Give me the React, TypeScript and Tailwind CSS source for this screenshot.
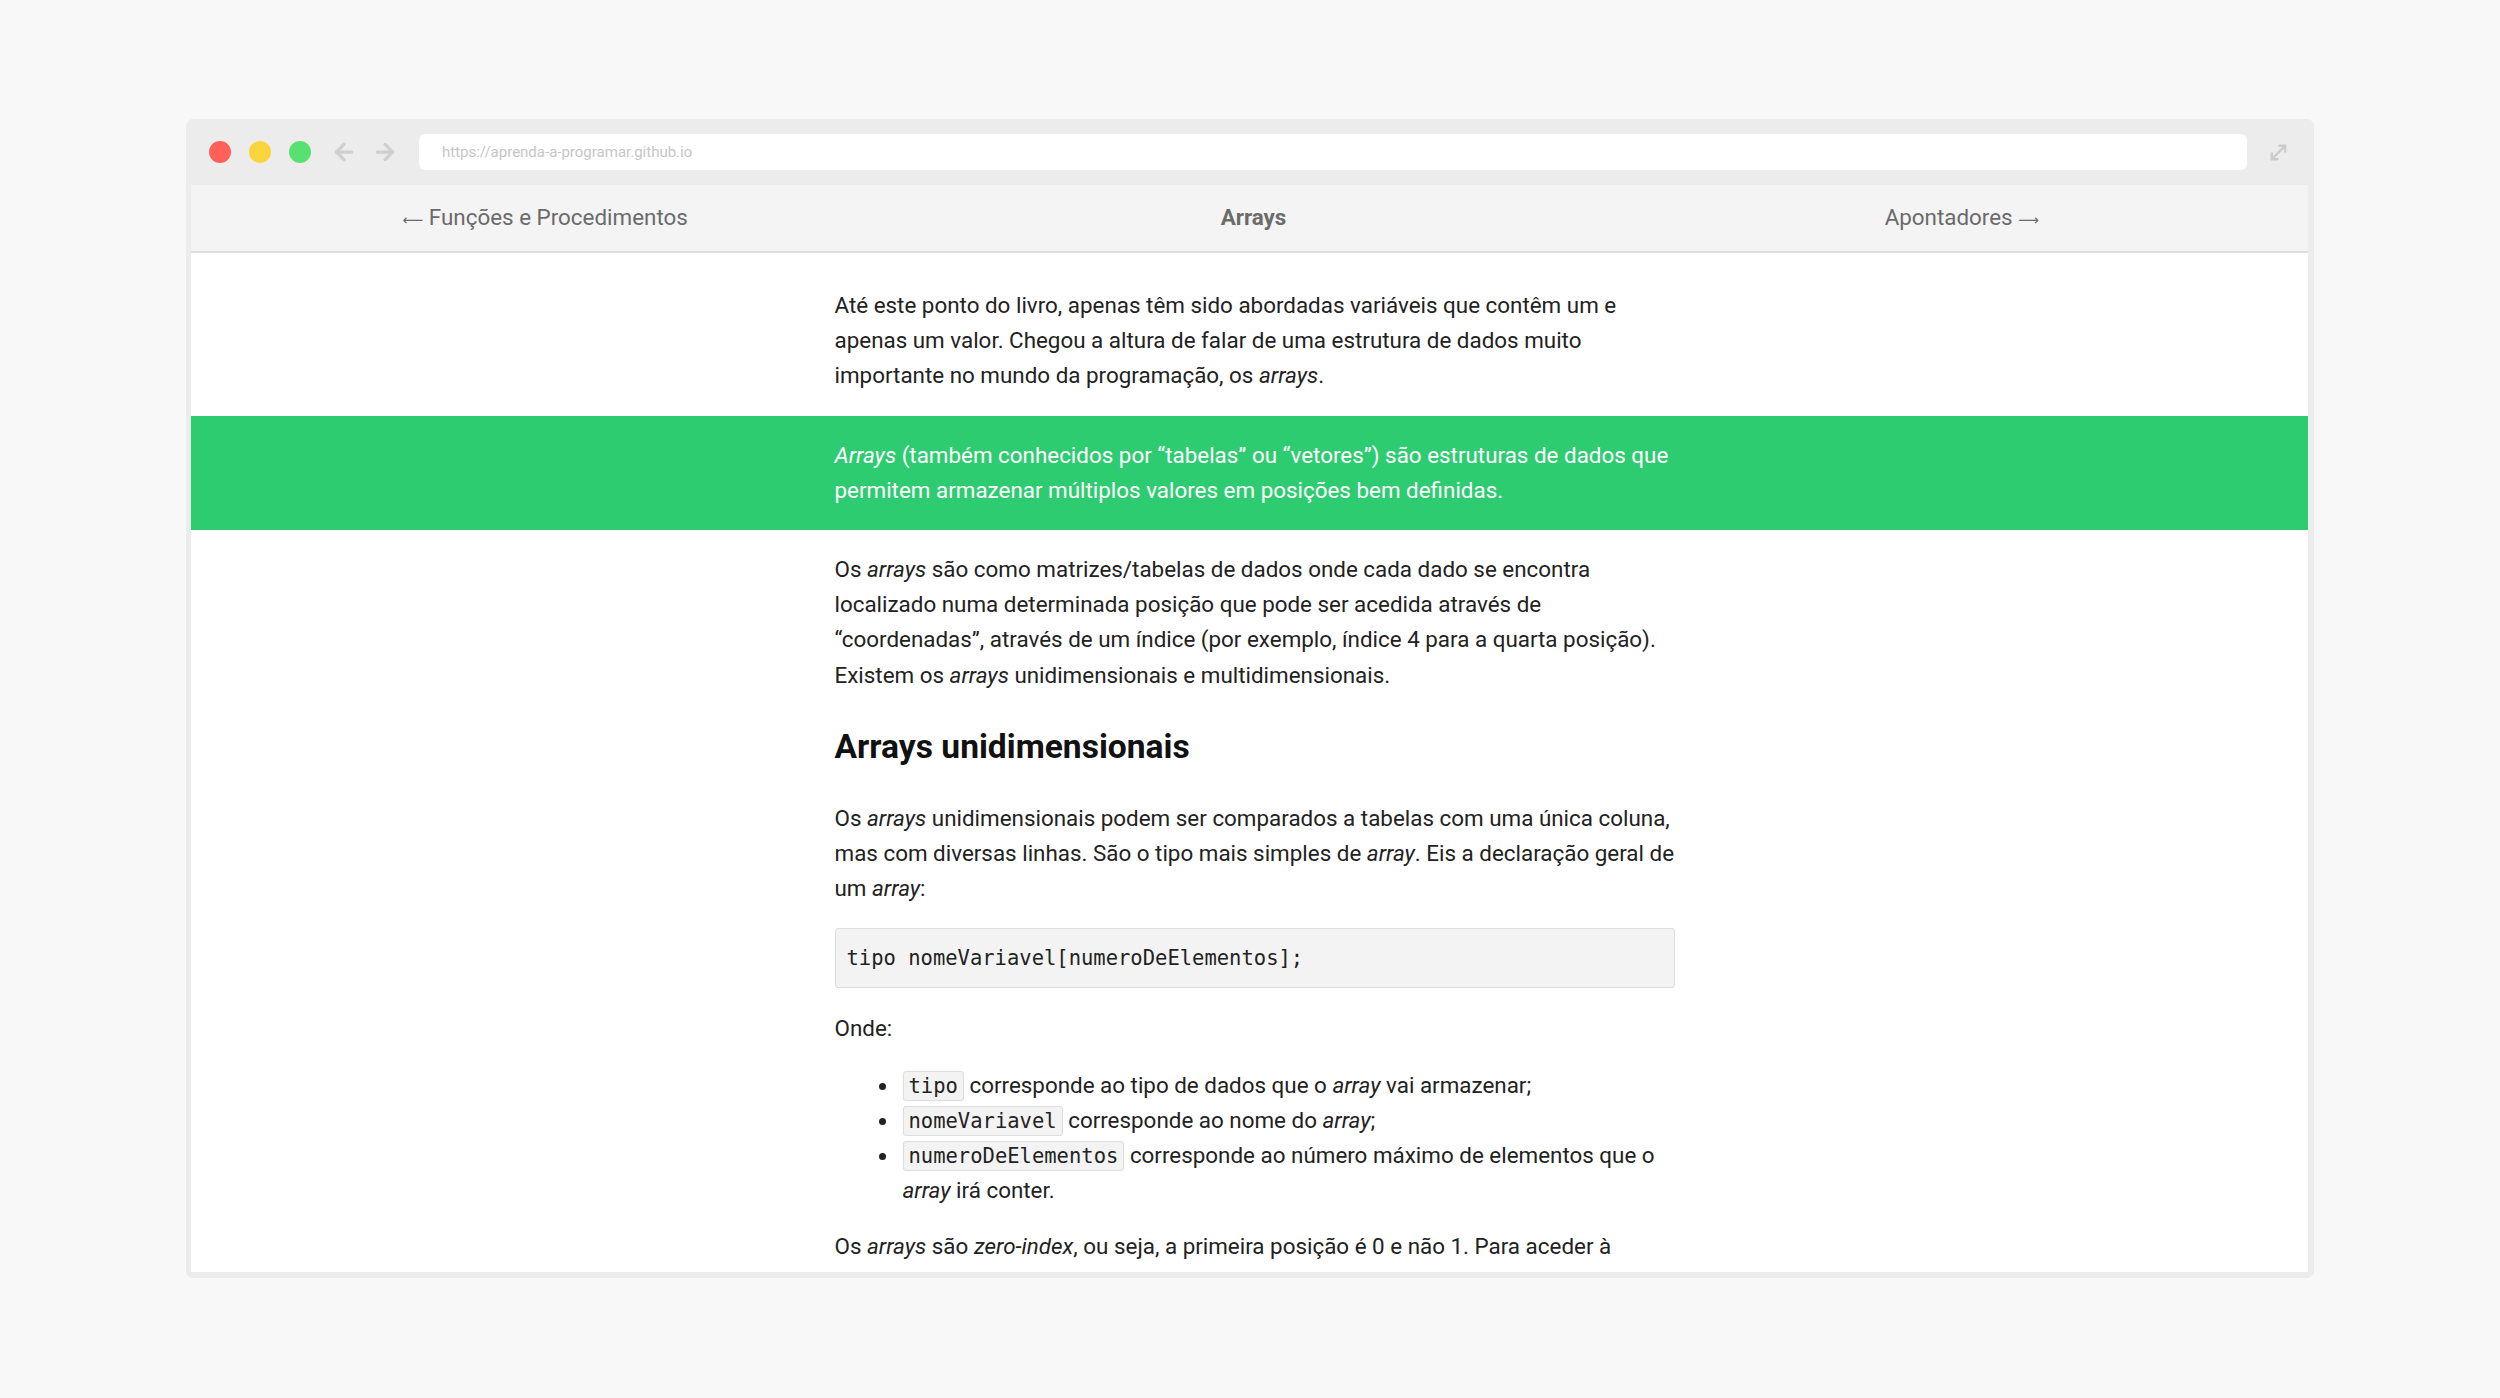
import React from "react";
import { ArrowLeft, ArrowRight, MoveDiagonal } from "lucide-react";

function Col({ children, className = "" }: { children: React.ReactNode; className?: string }) {
  return (
    <div className="pl-[10px]">
      <div className={"mx-auto w-[840px] " + className}>{children}</div>
    </div>
  );
}

function IC({ children }: { children: React.ReactNode }) {
  return (
    <code className="rounded-[3px] border border-[#dddddd] bg-[#f3f3f3] px-[5px] py-[2px] text-[20.5px] leading-none text-[#222] [font-family:'DejaVu_Sans_Mono','Liberation_Mono',monospace]">
      {children}
    </code>
  );
}

function Arr({ c }: { c: string }) {
  return <span className="text-[14.5px] [font-family:'DejaVu_Sans',sans-serif]">{c}</span>;
}

function Li({ children }: { children: React.ReactNode }) {
  return (
    <li className="relative before:absolute before:left-[-24px] before:top-[15px] before:h-[7px] before:w-[7px] before:rounded-full before:bg-[#222] before:content-['']">
      {children}
    </li>
  );
}

export default function App() {
  return (
    <div className="min-h-screen bg-[#f8f8f8] pt-[119px] pb-[120px] [font-family:Roboto,'Noto_Sans',sans-serif]">
      <div className="mx-auto w-[2128px] rounded-[7px] bg-[#ececec] pl-[5px] pr-[6px] pb-[6px]">
        {/* title bar */}
        <div className="flex h-[66px] items-center pl-[18px] pr-[18px]">
          <div className="flex items-center gap-[18px]">
            <span className="h-[22px] w-[22px] rounded-full bg-[#ff6159]" />
            <span className="h-[22px] w-[22px] rounded-full bg-[#fcd43c]" />
            <span className="h-[22px] w-[22px] rounded-full bg-[#58e070]" />
          </div>
          <div className="ml-[20px] flex items-center gap-[15px] text-[#cfcfcf]">
            <ArrowLeft size={26} strokeWidth={3} />
            <ArrowRight size={26} strokeWidth={3} />
          </div>
          <div className="ml-[21px] flex h-[36px] flex-1 items-center rounded-[6px] bg-white pl-[23px] text-[15px] text-[#c6c6c6]">
            https://aprenda-a-programar.github.io
          </div>
          <div className="ml-[20px] flex items-center text-[#cccccc]">
            <MoveDiagonal size={23} strokeWidth={2.5} />
          </div>
        </div>

        {/* viewport */}
        <div className="h-[1087px] overflow-hidden bg-white">
          <nav className="h-[68px] border-b-2 border-[#dedede] bg-[#f4f4f4] text-[22.4px] text-[#6b6b6b]">
            <div className="grid h-full w-[2125px] grid-cols-3 items-center">
              <div className="text-center">
                <Arr c="⟵" /> Funções e Procedimentos
              </div>
              <div className="text-center font-bold">Arrays</div>
              <div className="text-center">
                Apontadores <Arr c="⟶" />
              </div>
            </div>
          </nav>

          <div className="pt-[35px] text-[22.4px] leading-[35.2px] text-[#222]">
            <Col className="mb-[22px]">
              <p>
                Até este ponto do livro, apenas têm sido abordadas variáveis que contêm um e apenas um valor.
                Chegou a altura de falar de uma estrutura de dados muito importante no mundo da programação, os{" "}
                <em>arrays</em>.
              </p>
            </Col>

            <div className="mb-[22px] bg-[#2ecc71] py-[22px] text-white">
              <Col>
                <p>
                  <em>Arrays</em> (também conhecidos por “tabelas” ou “vetores”) são estruturas de dados que
                  permitem armazenar múltiplos valores em posições bem definidas.
                </p>
              </Col>
            </div>

            <Col>
              <p>
                Os <em>arrays</em> são como matrizes/tabelas de dados onde cada dado se encontra localizado numa
                determinada posição que pode ser acedida através de “coordenadas”, através de um índice (por
                exemplo, índice 4 para a quarta posição). Existem os <em>arrays</em> unidimensionais e
                multidimensionais.
              </p>

              <h2 className="my-[34px] text-[33.6px] font-bold leading-[40px] text-[#111]">Arrays unidimensionais</h2>

              <p className="mb-[22px]">
                Os <em>arrays</em> unidimensionais podem ser comparados a tabelas com uma única coluna, mas com
                diversas linhas. São o tipo mais simples de <em>array</em>. Eis a declaração geral de um{" "}
                <em>array</em>:
              </p>

              <pre className="mb-[23px] rounded-[3px] border border-[#dddddd] bg-[#f3f3f3] px-[11px] pt-[12px] pb-[11px] text-[20.5px] leading-[35px] text-[#222] [font-family:'DejaVu_Sans_Mono','Liberation_Mono',monospace]">
                tipo nomeVariavel[numeroDeElementos];
              </pre>

              <p className="mb-[21px]">Onde:</p>

              <ul className="mb-[21px] pl-[68px]">
                <Li>
                  <IC>tipo</IC> corresponde ao tipo de dados que o <em>array</em> vai armazenar;
                </Li>
                <Li>
                  <IC>nomeVariavel</IC> corresponde ao nome do <em>array</em>;
                </Li>
                <Li>
                  <IC>numeroDeElementos</IC> corresponde ao número máximo de elementos que o <em>array</em> irá
                  conter.
                </Li>
              </ul>

              <p>
                Os <em>arrays</em> são <em>zero-index</em>, ou seja, a primeira posição é 0 e não 1. Para aceder à
                primeira posição de um <em>array</em> utiliza-se o índice 0 e para aceder à última posição utiliza-se
                o índice correspondente ao número de elementos menos um.
              </p>
            </Col>
          </div>
        </div>
      </div>
    </div>
  );
}
